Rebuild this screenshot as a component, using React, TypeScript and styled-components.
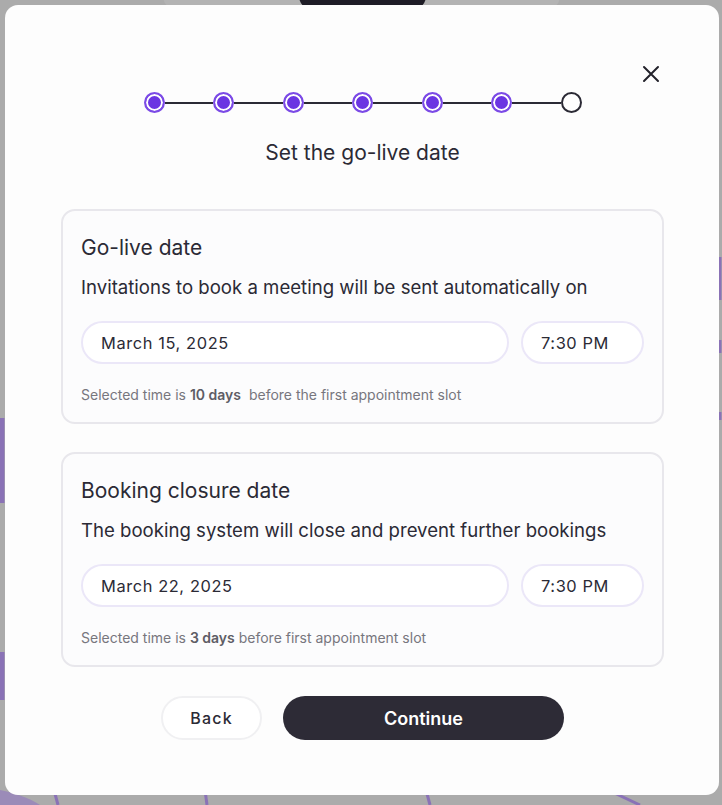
import React from 'react';
import styled, { createGlobalStyle } from 'styled-components';

const GlobalStyle = createGlobalStyle`
  html, body {
    margin: 0;
    padding: 0;
    background: #ababab;
    font-family: Inter, "Noto Sans", sans-serif;
    color: #2b2a35;
  }
  * { box-sizing: border-box; }
`;

const Page = styled.div`
  position: relative;
  width: 722px;
  height: 805px;
  overflow: hidden;
  padding: 5px 3px 10px 5px;
`;

const Backdrop = styled.svg`
  position: absolute;
  inset: 0;
  z-index: 0;
`;

const Modal = styled.div`
  position: relative;
  z-index: 1;
  width: 714px;
  height: 790px;
  background: #fdfdfd;
  border-radius: 13px;
  padding: 87px 55px 0 56px;
  display: flex;
  flex-direction: column;
  align-items: stretch;
`;

const CloseButton = styled.button`
  position: absolute;
  top: 55px;
  right: 54px;
  width: 28px;
  height: 28px;
  border: none;
  background: none;
  padding: 0;
  display: flex;
  align-items: center;
  justify-content: center;
  cursor: pointer;
  color: #23222b;
`;

const Stepper = styled.div`
  display: flex;
  align-items: center;
  justify-content: center;
`;

const Dot = styled.span<{ $done: boolean }>`
  width: 21px;
  height: 21px;
  border-radius: 50%;
  flex: none;
  background: ${p => (p.$done ? '#6b35e2' : '#ffffff')};
  border: 2px solid ${p => (p.$done ? '#7b4ae6' : '#2b2a35')};
  box-shadow: ${p => (p.$done ? 'inset 0 0 0 2px #ffffff' : 'none')};
`;

const Line = styled.span`
  width: 48.5px;
  height: 2px;
  background: #2b2a35;
  flex: none;
`;

const Heading = styled.h2`
  margin: 27px 0 0;
  text-align: center;
  font-size: 21px;
  font-weight: 400;
  line-height: 26px;
  color: #2b2a35;
`;

const Card = styled.section<{ $top: number }>`
  margin-top: ${p => p.$top}px;
  border: 2px solid #e8e7ec;
  border-radius: 14px;
  background: #fcfcfd;
  padding: 23px 18px 17px 18px;
`;

const CardTitle = styled.h3`
  margin: 0;
  font-size: 21px;
  font-weight: 400;
  line-height: 28px;
`;

const CardText = styled.p`
  margin: 13px 0 0;
  font-size: 18.6px;
  line-height: 24px;
`;

const InputRow = styled.div`
  display: flex;
  gap: 12px;
  margin-top: 22px;
`;

const Field = styled.div<{ $grow?: boolean }>`
  flex: ${p => (p.$grow ? '1 1 auto' : '0 0 123px')};
  height: 43px;
  border: 2px solid #ebe7f8;
  border-radius: 22px;
  background: #ffffff;
  display: flex;
  align-items: center;
  padding-left: 18px;
  font-size: 16.4px;
  letter-spacing: 0.6px;
  color: #2b2a35;
`;

const Hint = styled.p`
  margin: 21px 0 0;
  font-size: 14px;
  line-height: 20px;
  color: #77767d;
  b {
    font-weight: 600;
    color: #5e5d65;
  }
`;

const Actions = styled.div`
  display: flex;
  justify-content: center;
  gap: 21px;
  margin-top: 29px;
`;

const Button = styled.button<{ $primary?: boolean }>`
  height: 44px;
  border-radius: 22px;
  font-family: Inter, "Noto Sans", sans-serif;
  cursor: pointer;
  ${p =>
    p.$primary
      ? `
    width: 281px;
    background: #2d2b36;
    border: none;
    color: #ffffff;
    font-size: 18px;
    font-weight: 600;
  `
      : `
    width: 101px;
    background: #ffffff;
    border: 2px solid #f0f0f2;
    color: #2b2a35;
    font-size: 16px;
    font-weight: 500;
    letter-spacing: 1.2px;
  `}
`;

const steps = [true, true, true, true, true, true, false];

function DateCard(props: {
  top: number;
  title: string;
  text: string;
  date: string;
  time: string;
  hint: React.ReactNode;
}) {
  return (
    <Card $top={props.top}>
      <CardTitle>{props.title}</CardTitle>
      <CardText>{props.text}</CardText>
      <InputRow>
        <Field $grow>{props.date}</Field>
        <Field>{props.time}</Field>
      </InputRow>
      <Hint>{props.hint}</Hint>
    </Card>
  );
}

export default function App() {
  return (
    <Page>
      <GlobalStyle />
      <Backdrop width="722" height="805" viewBox="0 0 722 805">
        <rect x="163" y="-20" width="397" height="30" rx="14" fill="#b3b3b3" />
        <rect x="299" y="-20" width="127" height="30" rx="14" fill="#1e1c26" />
        <g fill="none" stroke="#8a72b6" strokeWidth="3">
          <path d="M2 418 L2 503" strokeWidth="5" />
          <path d="M2 652 L2 700" strokeWidth="5" />
          <path d="M54 790 L58 805" />
          <path d="M205 790 L207 805" />
          <path d="M426 790 L430 805" />
          <path d="M608 790 L640 805" />
          <path d="M720 257 L720 300" />
          <path d="M720 340 L720 353" />
          <path d="M720 412 L720 420" />
        </g>
        <path d="M0 790 L0 805 L40 805 C 30 798, 12 792, 0 790 Z" fill="#9b8bb8" />
      </Backdrop>
      <Modal>
        <CloseButton aria-label="Close">
          <svg width="18" height="18" viewBox="0 0 18 18">
            <path d="M2 2 L16 16 M16 2 L2 16" stroke="currentColor" strokeWidth="2" strokeLinecap="round" />
          </svg>
        </CloseButton>
        <Stepper>
          {steps.map((done, i) => (
            <React.Fragment key={i}>
              {i > 0 && <Line />}
              <Dot $done={done} />
            </React.Fragment>
          ))}
        </Stepper>
        <Heading>Set the go-live date</Heading>
        <DateCard
          top={43}
          title="Go-live date"
          text="Invitations to book a meeting will be sent automatically on"
          date="March 15, 2025"
          time="7:30 PM"
          hint={
            <>
              Selected time is <b>10 days</b>&nbsp; before the first appointment slot
            </>
          }
        />
        <DateCard
          top={28}
          title="Booking closure date"
          text="The booking system will close and prevent further bookings"
          date="March 22, 2025"
          time="7:30 PM"
          hint={
            <>
              Selected time is <b>3 days</b> before first appointment slot
            </>
          }
        />
        <Actions>
          <Button>Back</Button>
          <Button $primary>Continue</Button>
        </Actions>
      </Modal>
    </Page>
  );
}
